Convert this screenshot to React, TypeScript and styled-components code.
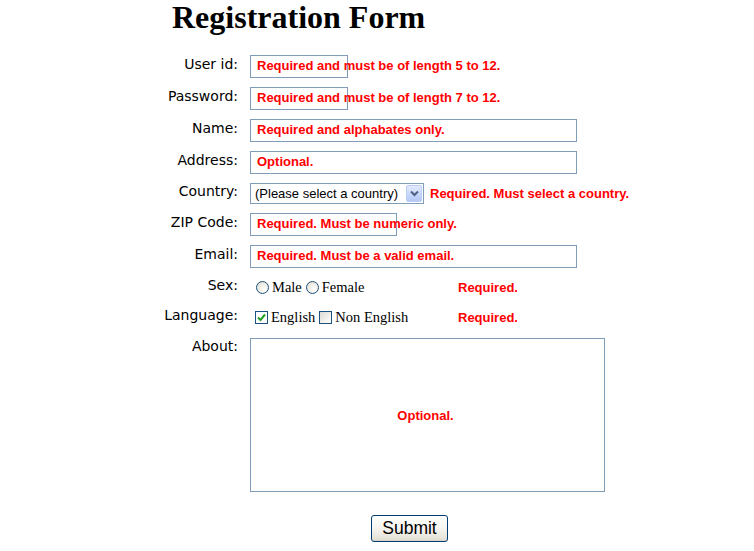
import React from "react";
import styled, { createGlobalStyle } from "styled-components";

const GlobalStyle = createGlobalStyle`
  html, body { margin: 0; padding: 0; background: #ffffff; }
  body { width: 754px; height: 551px; overflow: hidden; }
`;

const Page = styled.div`
  display: flex;
  flex-direction: column;
  padding-top: 0;
`;

const Title = styled.h1`
  margin: 0 0 16px 172px;
  font-family: "Liberation Serif", "Times New Roman", serif;
  font-weight: bold;
  font-size: 32px;
  line-height: 34px;
  color: #000;
`;

const Row = styled.div<{ $h: number; $top?: boolean }>`
  display: grid;
  grid-template-columns: 238px 1fr;
  column-gap: 12px;
  height: ${(p) => p.$h}px;
  align-items: ${(p) => (p.$top ? "start" : "center")};
  padding-top: ${(p) => (p.$top ? 6 : 0)}px;
`;

const Label = styled.label<{ $top?: boolean }>`
  text-align: right;
  font-family: "DejaVu Sans", Verdana, sans-serif;
  font-size: 14px;
  line-height: 22px;
  color: #000;
  padding-bottom: ${(p) => (p.$top ? 0 : 4)}px;
  margin-top: ${(p) => (p.$top ? -3 : 0)}px;
`;

const Field = styled.div`
  display: flex;
  align-items: center;
`;

const Box = styled.div<{ $w: number }>`
  position: relative;
  box-sizing: border-box;
  width: ${(p) => p.$w}px;
  height: 23px;
  border: 1px solid #7f9db9;
  background: #fff;
`;

const Hint = styled.span`
  position: absolute;
  left: 6px;
  top: -1px;
  white-space: nowrap;
  font-family: "Liberation Sans", Arial, sans-serif;
  font-weight: bold;
  font-size: 13px;
  line-height: 22px;
  color: #ff0000;
`;

const Message = styled.span<{ $left?: number }>`
  margin-left: ${(p) => p.$left ?? 0}px;
  white-space: nowrap;
  font-family: "Liberation Sans", Arial, sans-serif;
  font-weight: bold;
  font-size: 13px;
  color: #ff0000;
`;

const Select = styled.div`
  box-sizing: border-box;
  width: 174px;
  height: 21px;
  border: 1px solid #7f9db9;
  display: flex;
  align-items: center;
  justify-content: space-between;
  background: #fff;
  padding: 1px 1px 1px 4px;
  font-family: "Liberation Sans", Arial, sans-serif;
  font-size: 13px;
  color: #000;
`;

const SelectText = styled.span`
  white-space: nowrap;
`;

const Arrow = styled.span`
  box-sizing: border-box;
  width: 16px;
  height: 17px;
  border: 1px solid #b9cdf6;
  border-radius: 2px;
  background: linear-gradient(180deg, #e2ebfe 0%, #c6d6fb 60%, #b5c9f6 100%);
  display: flex;
  align-items: center;
  justify-content: center;
`;

const Options = styled.div<{ $pad: number }>`
  display: flex;
  align-items: center;
  width: ${(p) => 208 - p.$pad}px;
  padding-left: ${(p) => p.$pad}px;
  gap: 4px;
`;

const Option = styled.span`
  display: inline-flex;
  align-items: center;
  gap: 3px;
  font-family: "Liberation Serif", "Times New Roman", serif;
  font-size: 14.5px;
  color: #000;
`;

const Radio = styled.span`
  box-sizing: border-box;
  width: 13px;
  height: 13px;
  border-radius: 50%;
  border: 1px solid #1c5180;
  background: radial-gradient(circle at 65% 65%, #ffffff 0%, #ece9e0 60%, #d6d3c8 100%);
`;

const Check = styled.span<{ $checked?: boolean }>`
  box-sizing: border-box;
  width: 13px;
  height: 13px;
  border: 1px solid #1c5180;
  background: ${(p) =>
    p.$checked ? "#fff" : "linear-gradient(135deg, #dcdad3 0%, #f2f1ec 60%, #ffffff 100%)"};
  display: flex;
  align-items: center;
  justify-content: center;
`;

const TextArea = styled.div`
  box-sizing: border-box;
  width: 355px;
  height: 154px;
  border: 1px solid #7f9db9;
  background: #fff;
  display: flex;
  align-items: center;
  justify-content: center;
  padding-right: 4px;
`;

const SubmitButton = styled.button`
  box-sizing: border-box;
  margin: 17px 0 0 371px;
  width: 77px;
  height: 27px;
  border: 1px solid #003c74;
  border-radius: 3px;
  background: linear-gradient(180deg, #ffffff 0%, #f5f4ef 50%, #e6e4d9 90%, #d6d0c5 100%);
  font-family: "Liberation Sans", Arial, sans-serif;
  font-size: 17.5px;
  color: #000;
  padding: 0 0 1px 0;
  align-self: flex-start;
`;

const TextInputRow = ({ label, width, hint, h }: { label: string; width: number; hint: string; h: number }) => (
  <Row $h={h}>
    <Label>{label}</Label>
    <Field>
      <Box $w={width}>
        <Hint>{hint}</Hint>
      </Box>
    </Field>
  </Row>
);

export default function App() {
  return (
    <>
      <GlobalStyle />
      <Page>
        <Title>Registration Form</Title>
        <TextInputRow h={32} label="User id:" width={98} hint="Required and must be of length 5 to 12." />
        <TextInputRow h={32} label="Password:" width={98} hint="Required and must be of length 7 to 12." />
        <TextInputRow h={32} label="Name:" width={327} hint="Required and alphabates only." />
        <TextInputRow h={32} label="Address:" width={327} hint="Optional." />
        <Row $h={30}>
          <Label>Country:</Label>
          <Field>
            <Select>
              <SelectText>(Please select a country)</SelectText>
              <Arrow>
                <svg width="9" height="7" viewBox="0 0 9 7">
                  <path d="M1 1.5 L4.5 5 L8 1.5" fill="none" stroke="#4d6185" strokeWidth="2" />
                </svg>
              </Arrow>
            </Select>
            <Message $left={6}>Required. Must select a country.</Message>
          </Field>
        </Row>
        <TextInputRow h={32} label="ZIP Code:" width={147} hint="Required. Must be numeric only." />
        <TextInputRow h={32} label="Email:" width={327} hint="Required. Must be a valid email." />
        <Row $h={30}>
          <Label>Sex:</Label>
          <Field>
            <Options $pad={6}>
              <Option>
                <Radio />
                Male
              </Option>
              <Option>
                <Radio />
                Female
              </Option>
            </Options>
            <Message>Required.</Message>
          </Field>
        </Row>
        <Row $h={30}>
          <Label>Language:</Label>
          <Field>
            <Options $pad={5}>
              <Option>
                <Check $checked>
                  <svg width="9" height="9" viewBox="0 0 9 9">
                    <path d="M1 4.5 L3.5 7 L8 1.5" fill="none" stroke="#21a121" strokeWidth="2" />
                  </svg>
                </Check>
                English
              </Option>
              <Option>
                <Check />
                Non English
              </Option>
            </Options>
            <Message>Required.</Message>
          </Field>
        </Row>
        <Row $h={160} $top>
          <Label $top>About:</Label>
          <Field>
            <TextArea>
              <Message>Optional.</Message>
            </TextArea>
          </Field>
        </Row>
        <SubmitButton type="button">Submit</SubmitButton>
      </Page>
    </>
  );
}
